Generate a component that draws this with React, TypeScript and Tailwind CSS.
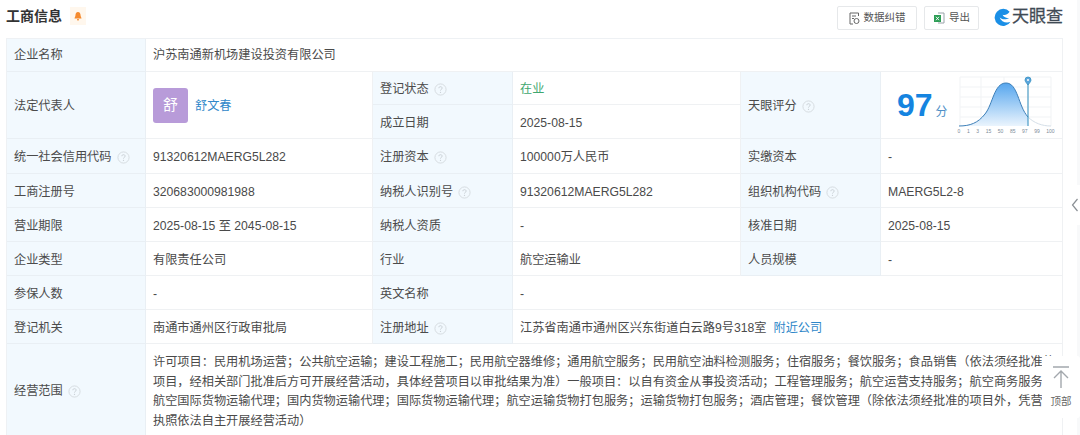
import React from "react";

const font = "font-['Liberation_Sans','Noto_Sans_CJK_SC',sans-serif]";

function Help() {
  return (
    <svg width="13" height="13" viewBox="0 0 14 14" className="ml-[5px] shrink-0">
      <circle cx="7" cy="7" r="6" fill="none" stroke="#d5dadf" strokeWidth="1" />
      <path d="M5.2 5.6c0-1 .8-1.6 1.8-1.6s1.8.6 1.8 1.5c0 1.3-1.8 1.3-1.8 2.6" fill="none" stroke="#c6ccd2" strokeWidth="1" />
      <circle cx="7" cy="10" r=".7" fill="#c6ccd2" />
    </svg>
  );
}

function L({ children, help, className = "" }: { children: React.ReactNode; help?: boolean; className?: string }) {
  return (
    <div className={`flex items-center bg-[#f2f9fe] pl-[7px] pt-[3px] border-r border-b border-[#e9eff4] text-[12.2px] text-[#4b4b4b] ${className}`}>
      {children}
      {help && <Help />}
    </div>
  );
}

function V({ children, className = "" }: { children?: React.ReactNode; className?: string }) {
  return (
    <div className={`flex items-center pl-[7px] pt-[3px] border-r border-b border-[#eff1f3] text-[12.2px] text-[#4a4a4a] ${className}`}>
      {children}
    </div>
  );
}

function Chart() {
  const curve = "M1 52C12 52 20 49 27 40C35 30 36 9 48 9C60 9 60 32 70 43";
  return (
    <div className="relative w-[100px] h-[62px]">
      <svg width="100" height="62" viewBox="0 0 100 62" className="block">
        <defs>
          <linearGradient id="bell" x1="0" y1="0" x2="0" y2="1">
            <stop offset="0" stopColor="#56a6ee" />
            <stop offset="1" stopColor="#eaf4fd" />
          </linearGradient>
        </defs>
        <g stroke="#f1f3f5" strokeWidth="1">
          <path d="M2 3H93M2 13H93M2 23H93M2 33H93M2 43H93" />
          <path d="M2 3V52M23 3V52M46 3V52M70 3V52M93 3V52" />
        </g>
        <path d={`${curve}V52Z`} fill="url(#bell)" />
        <path d={curve} fill="none" stroke="#3d7fb8" strokeWidth="1" />
        <path d="M70 43C76 49 84 52 93 52" fill="none" stroke="#d5dfe8" strokeWidth="1" />
        <path d="M70 9V52" stroke="#2f8dbd" strokeWidth="1" />
        <path d="M70 11C67.500 8 67 7 67 6A3 3 0 0 1 73 6C73 7 72.500 8 70 11Z" fill="#5aa5dc" stroke="#2f8dbd" strokeWidth=".7" />
        <circle cx="70" cy="6" r="1" fill="#fff" />
      </svg>
      <div className="absolute left-0 right-[3px] bottom-[2px] flex justify-between text-[5px] leading-[6px] text-[#7c8a97]">
        {["0", "1", "3", "15", "50", "85", "97", "99", "100"].map((t) => (
          <span key={t}>{t}</span>
        ))}
      </div>
    </div>
  );
}

function Logo() {
  return (
    <div className="flex items-center">
      <svg width="19" height="20" viewBox="0 0 20 20">
        <path d="M17.500 4.500A9 9 0 1 0 18.500 15C14 17 8.500 15 7 10.500C10 13 14 13 17 11C14 11 11 10 10 7.500C12 8.500 15 8 17.500 4.500Z" fill="#1a8fe6" />
      </svg>
      <span className="text-[17px] leading-[20px] text-[#3f4a54] [-webkit-text-stroke:0.3px_#3f4a54]">天眼查</span>
    </div>
  );
}

export default function App() {
  return (
    <div className={`${font} relative w-[1080px] h-[435px] overflow-hidden bg-white`}>
      <div className="flex items-center h-[38px] pb-[2px] pl-[6px] pr-[17px]">
        <span className="text-[14px] font-bold text-[#333] mb-[4px]">工商信息</span>
        <span className="ml-[8px] mb-[4px] flex items-center justify-center w-[16px] h-[18px] bg-[#fff7ed]">
          <svg width="10" height="10" viewBox="0 0 10 10">
            <path d="M5 1C3.200 1 2.500 2.500 2.500 4C2.500 5.500 1.500 6.500 1.500 7.500H8.500C8.500 6.500 7.500 5.500 7.500 4C7.500 2.500 6.800 1 5 1Z" fill="#f58a2e" />
            <rect x="4" y="8" width="2" height="1.500" rx=".7" fill="#f58a2e" />
          </svg>
        </span>
        <div className="ml-auto flex items-center">
          <button className="flex items-center justify-center w-[80px] h-[24px] border border-[#e6e8ea] rounded-[2px] text-[10.500px] text-[#555]">
            <svg width="11" height="13" viewBox="0 0 11 13" className="mr-[4px]">
              <path d="M9.500 4V1H1V12H4M3 4H7M3 6.500H5" fill="none" stroke="#666" strokeWidth="1" />
              <circle cx="7.500" cy="9" r="2.500" fill="none" stroke="#666" strokeWidth="1" />
            </svg>
            数据纠错
          </button>
          <button className="ml-[7px] flex items-center justify-center w-[55px] h-[24px] border border-[#e6e8ea] rounded-[2px] text-[10.500px] text-[#555]">
            <svg width="12" height="12" viewBox="0 0 12 12" className="mr-[4px]">
              <path d="M5 1H11V11H5" fill="none" stroke="#9aa3aa" strokeWidth="1" />
              <rect x="1" y="3" width="7" height="7" fill="#2e9e57" />
              <path d="M3 4.800L6 8.200M6 4.800L3 8.200" stroke="#fff" strokeWidth=".9" />
            </svg>
            导出
          </button>
          <div className="ml-[14px] mb-[3px]">
            <Logo />
          </div>
        </div>
      </div>

      <div className="ml-[6px] w-[1057px] border-l border-t border-[#eef1f4] grid grid-cols-[139px_227px_140px_228px_140px_182px] grid-rows-[33px_33px_34px_35px_34px_34px_34px_34px_34px_92px]">
        <L className="!pt-[1px]">企业名称</L>
        <V className="col-span-5 !pt-[1px]">沪苏南通新机场建设投资有限公司</V>

        <L className="row-span-2">法定代表人</L>
        <V className="row-span-2 !pt-0">
          <span className="flex items-center justify-center w-[35px] h-[35px] rounded-[3px] bg-[#b89bd9] text-white text-[15px]">舒</span>
          <span className="ml-[7px] mt-[3px] text-[#2f87c9]">舒文春</span>
        </V>
        <L help>登记状态</L>
        <V><span className="text-[#3fa76f]">在业</span></V>
        <L className="row-span-2" help>天眼评分</L>
        <V className="row-span-2 !pt-0 pl-[16px]">
          <span className="text-[32px] leading-none font-bold text-[#1584e0]">97</span>
          <span className="ml-[3px] mt-[13px] text-[12px] text-[#4f8fc6]">分</span>
          <div className="ml-[10px]">
            <Chart />
          </div>
        </V>
        <L>成立日期</L>
        <V>2025-08-15</V>

        <L help>统一社会信用代码</L>
        <V>91320612MAERG5L282</V>
        <L help>注册资本</L>
        <V>100000万人民币</V>
        <L>实缴资本</L>
        <V>-</V>

        <L>工商注册号</L>
        <V>320683000981988</V>
        <L help>纳税人识别号</L>
        <V>91320612MAERG5L282</V>
        <L help>组织机构代码</L>
        <V>MAERG5L2-8</V>

        <L>营业期限</L>
        <V>2025-08-15 至 2045-08-15</V>
        <L>纳税人资质</L>
        <V>-</V>
        <L>核准日期</L>
        <V>2025-08-15</V>

        <L>企业类型</L>
        <V>有限责任公司</V>
        <L>行业</L>
        <V>航空运输业</V>
        <L>人员规模</L>
        <V>-</V>

        <L>参保人数</L>
        <V>-</V>
        <L>英文名称</L>
        <V className="col-span-3">-</V>

        <L>登记机关</L>
        <V>南通市通州区行政审批局</V>
        <L help>注册地址</L>
        <V className="col-span-3">
          江苏省南通市通州区兴东街道白云路9号318室
          <span className="ml-[7px] text-[#2f87c9]">附近公司</span>
        </V>

        <L help>经营范围</L>
        <div className="col-span-5 pl-[7px] pt-[9px] border-r border-[#eff1f3] text-[12.2px] leading-[19.500px] text-[#4a4a4a]">
          <div className="whitespace-nowrap">许可项目：民用机场运营；公共航空运输；建设工程施工；民用航空器维修；通用航空服务；民用航空油料检测服务；住宿服务；餐饮服务；食品销售（依法须经批准的</div>
          <div className="whitespace-nowrap">项目，经相关部门批准后方可开展经营活动，具体经营项目以审批结果为准）一般项目：以自有资金从事投资活动；工程管理服务；航空运营支持服务；航空商务服务</div>
          <div className="whitespace-nowrap">航空国际货物运输代理；国内货物运输代理；国际货物运输代理；航空运输货物打包服务；运输货物打包服务；酒店管理；餐饮管理（除依法须经批准的项目外，凭营</div>
          <div className="whitespace-nowrap">执照依法自主开展经营活动）</div>
        </div>
      </div>

      <div className="absolute right-0 top-0 w-[3px] h-[435px] bg-[#f8f9fa]" />

      <div className="absolute left-[1070px] top-[185px] w-[10px] h-[40px] bg-white flex items-center justify-center">
        <svg width="8" height="14" viewBox="0 0 8 14">
          <path d="M6.500 1L1.500 7L6.500 13" fill="none" stroke="#8a8f94" strokeWidth="1.200" />
        </svg>
      </div>

      <div className="absolute left-[1042px] top-[356px] w-[38px] h-[62px] bg-white rounded-[3px] flex flex-col items-center pt-[10px]">
        <svg width="16" height="22" viewBox="0 0 16 22">
          <path d="M0 1H16M8 5V22M1 12L8 5L15 12" fill="none" stroke="#a3a8ad" strokeWidth="1.400" />
        </svg>
        <span className="text-[10.500px] leading-[14px] mt-[6px] text-[#666]">顶部</span>
      </div>
    </div>
  );
}
